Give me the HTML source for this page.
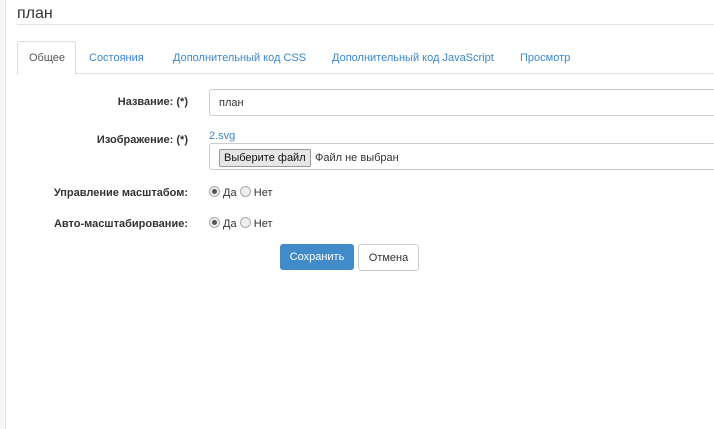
<!DOCTYPE html><html><head><style>
body{margin:0;width:714px;height:429px;background:#fff;font-family:"Liberation Sans",Arial,sans-serif;font-size:11px;color:#333;position:relative;overflow:hidden}
.strip{position:absolute;left:0;top:0;width:5px;height:429px;background:#f7f7f7;border-right:1px solid #e3e3e3}
.a{position:absolute;white-space:nowrap}
.lbl{font-weight:bold;text-align:right;width:180px;left:8px}
.tab{color:#3a87c8;top:52px}
.radio{display:inline-block;width:9px;height:9px;border:1px solid #aaa;border-radius:50%;background:#eee;vertical-align:-1px;position:relative}
.radio.on:after{content:"";position:absolute;left:2px;top:2px;width:5px;height:5px;border-radius:50%;background:#555}
</style></head><body>
<div class="strip"></div>
<div class="a" style="left:17px;top:5px;font-size:16px;color:#333">план</div>
<div class="a" style="left:17px;top:24px;width:697px;height:1px;background:#e2e2e2"></div>
<div class="a" style="left:17px;top:73px;width:697px;height:1px;background:#ddd"></div>
<div class="a" style="left:17px;top:41px;width:57px;height:32px;border:1px solid #ddd;border-bottom:1px solid #fff;border-radius:3px 3px 0 0;background:#fff"></div>
<div class="a tab" style="left:29px;color:#555">Общее</div>
<div class="a tab" style="left:89px">Состояния</div>
<div class="a tab" style="left:173px">Дополнительный код CSS</div>
<div class="a tab" style="left:332px">Дополнительный код JavaScript</div>
<div class="a tab" style="left:520px">Просмотр</div>
<div class="a lbl" style="top:96px">Название: (*)</div>
<div class="a" style="left:209px;top:89px;width:510px;height:25px;border:1px solid #ccc;border-radius:3px"></div>
<div class="a" style="left:219px;top:97px">план</div>
<div class="a lbl" style="top:134px">Изображение: (*)</div>
<div class="a" style="left:209px;top:130px;color:#3a87c8">2.svg</div>
<div class="a" style="left:209px;top:143px;width:510px;height:25px;border:1px solid #ccc;border-radius:3px"></div>
<div class="a" style="left:219px;top:149px;width:90px;height:16px;border:1px solid #999;background:#e6e6e6;border-radius:2px"></div>
<div class="a" style="left:224px;top:152px;color:#111">Выберите файл</div>
<div class="a" style="left:315px;top:152px;color:#333">Файл не выбран</div>
<div class="a lbl" style="top:187px">Управление масштабом:</div>
<div class="a" style="left:209px;top:186px"><span class="radio on"></span> Да <span class="radio"></span> Нет</div>
<div class="a lbl" style="top:218px">Авто-масштабирование:</div>
<div class="a" style="left:209px;top:217px"><span class="radio on"></span> Да <span class="radio"></span> Нет</div>
<div class="a" style="left:280px;top:244px;width:74px;height:26px;background:#428bca;border-radius:3px;color:#fff;text-align:center;line-height:27px">Сохранить</div>
<div class="a" style="left:358px;top:244px;width:59px;height:25px;border:1px solid #ccc;border-radius:3px;color:#333;text-align:center;line-height:26px">Отмена</div>
</body></html>
